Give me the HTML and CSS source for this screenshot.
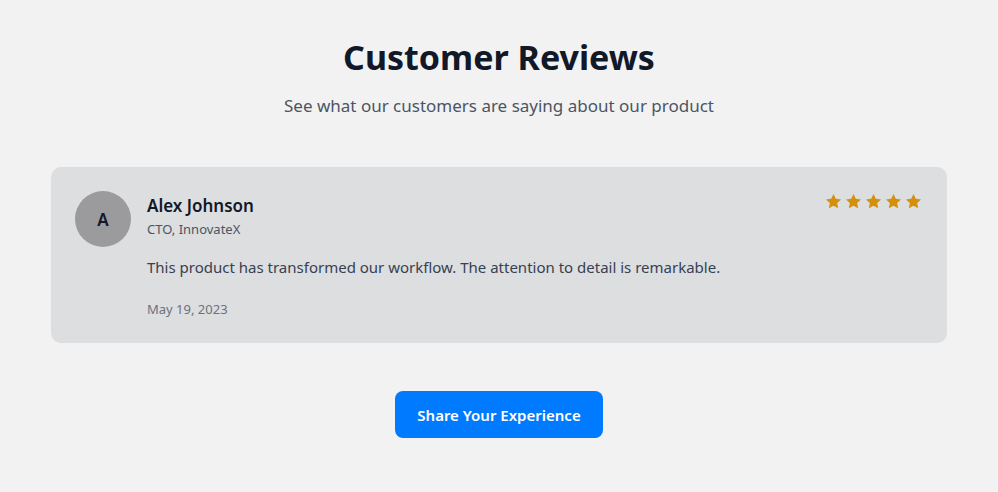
FILE: index.html
```html
<!DOCTYPE html>
<html lang="en">
<head>
<meta charset="utf-8">
<title>Customer Reviews</title>
<link rel="stylesheet" href="styles.css">
</head>
<body>
<main class="page">
  <header class="intro">
    <h1 class="title">Customer Reviews</h1>
    <p class="subtitle">See what our customers are saying about our product</p>
  </header>
  <section class="review">
    <div class="avatar">A</div>
    <div class="review-body">
      <div class="review-head">
        <div class="who">
          <div class="name">Alex Johnson</div>
          <div class="role">CTO, InnovateX</div>
        </div>
        <div class="stars" aria-label="5 stars">
          <svg viewBox="0 0 24 24"><path d="M12 2.5l2.9 6.1 6.6.8-4.9 4.6 1.3 6.6L12 17.3l-5.9 3.3 1.3-6.6-4.9-4.6 6.6-.8z"/></svg>
          <svg viewBox="0 0 24 24"><path d="M12 2.5l2.9 6.1 6.6.8-4.9 4.6 1.3 6.6L12 17.3l-5.9 3.3 1.3-6.6-4.9-4.6 6.6-.8z"/></svg>
          <svg viewBox="0 0 24 24"><path d="M12 2.5l2.9 6.1 6.6.8-4.9 4.6 1.3 6.6L12 17.3l-5.9 3.3 1.3-6.6-4.9-4.6 6.6-.8z"/></svg>
          <svg viewBox="0 0 24 24"><path d="M12 2.5l2.9 6.1 6.6.8-4.9 4.6 1.3 6.6L12 17.3l-5.9 3.3 1.3-6.6-4.9-4.6 6.6-.8z"/></svg>
          <svg viewBox="0 0 24 24"><path d="M12 2.5l2.9 6.1 6.6.8-4.9 4.6 1.3 6.6L12 17.3l-5.9 3.3 1.3-6.6-4.9-4.6 6.6-.8z"/></svg>
        </div>
      </div>
      <p class="text">This product has transformed our workflow. The attention to detail is remarkable.</p>
      <div class="date">May 19, 2023</div>
    </div>
  </section>
  <div class="actions">
    <button class="share" type="button">Share Your Experience</button>
  </div>
</main>
</body>
</html>
```

FILE: styles.css
```css
* { box-sizing: border-box; }
html, body { margin: 0; padding: 0; }
body {
  background: #f3f2f3;
  font-family: "Noto Sans", "Open Sans", sans-serif;
  color: #111827;
}
.page {
  padding: 35px 51px 40px;
}
.intro { text-align: center; }
.title {
  margin: 0;
  font-size: 34px;
  line-height: 44px;
  font-weight: 700;
  color: #111827;
}
.subtitle {
  margin: 14px 0 0;
  font-size: 17px;
  line-height: 26px;
  color: #4b5563;
}
.review {
  margin-top: 48px;
  background: #dcdee0;
  border-radius: 10px;
  padding: 24px;
  display: flex;
  gap: 16px;
  align-items: flex-start;
}
.avatar {
  width: 56px;
  height: 56px;
  flex: none;
  border-radius: 50%;
  background: #9b9b9d;
  color: #111827;
  font-weight: 600;
  font-size: 17px;
  display: flex;
  align-items: center;
  justify-content: center;
}
.review-body { flex: 1; }
.review-head {
  display: flex;
  justify-content: space-between;
  align-items: flex-start;
}
.name {
  font-size: 17px;
  line-height: 26px;
  font-weight: 600;
  margin-top: 2px;
}
.role {
  font-size: 13px;
  line-height: 20px;
  color: #4b5563;
}
.stars { display: flex; gap: 1px; margin-top: 1px; }
.stars svg { width: 19px; height: 19px; fill: #d4900a; }
.text {
  margin: 16px 0 0;
  font-size: 15px;
  line-height: 24px;
  color: #374151;
}
.date {
  margin-top: 20px;
  font-size: 13px;
  line-height: 20px;
  color: #6b7280;
}
.actions {
  display: flex;
  justify-content: center;
  margin-top: 48px;
}
.share {
  border: 0;
  background: #007bff;
  color: #fff;
  font-family: inherit;
  font-size: 15px;
  font-weight: 600;
  padding: 12px 22px;
  height: 47px;
  border-radius: 8px;
}
```
